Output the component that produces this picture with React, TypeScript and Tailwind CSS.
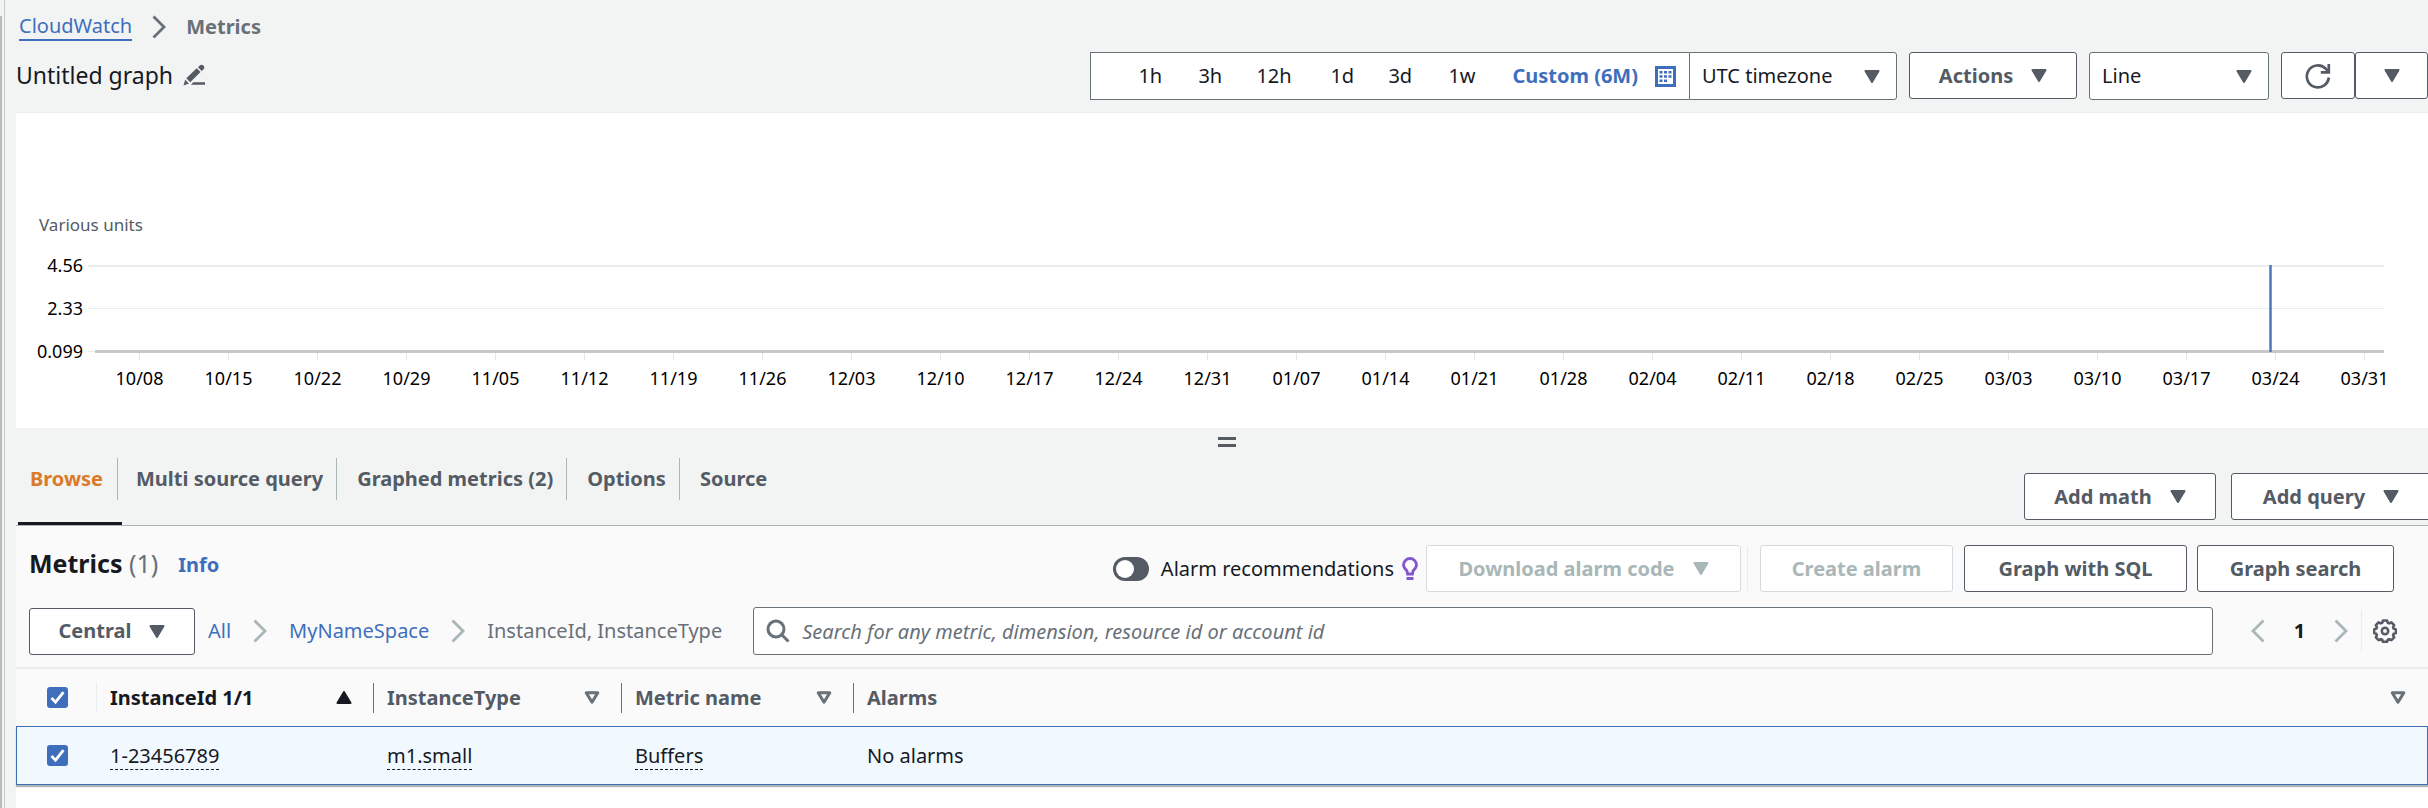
import type { ReactNode } from "react";

const TICKS = [
  "10/08", "10/15", "10/22", "10/29", "11/05", "11/12", "11/19", "11/26", "12/03",
  "12/10", "12/17", "12/24", "12/31", "01/07", "01/14", "01/21", "01/28", "02/04",
  "02/11", "02/18", "02/25", "03/03", "03/10", "03/17", "03/24", "03/31",
];

const RANGES = [
  { label: "1h", width: "w-[60px]" },
  { label: "3h", width: "w-[58px]" },
  { label: "12h", width: "w-[74px]" },
  { label: "1d", width: "w-[58px]" },
  { label: "3d", width: "w-[60px]" },
  { label: "1w", width: "w-[64px]" },
];

function Caret({ className = "" }: { className?: string }) {
  return (
    <svg viewBox="0 0 16 13" className={`h-[13px] w-4 shrink-0 fill-current ${className}`} aria-hidden="true">
      <path d="M1.5 0h13a1 1 0 0 1 .9 1.5L9 12.3a1.2 1.2 0 0 1-2 0L.6 1.5A1 1 0 0 1 1.5 0z" />
    </svg>
  );
}

function SortIcon() {
  return (
    <svg viewBox="0 0 16 14" className="h-[14px] w-4 shrink-0 text-[#687078]" aria-hidden="true">
      <path d="M2.2 1.7h11.6L8 11.2z" fill="none" stroke="currentColor" strokeWidth="3" strokeLinejoin="round" />
    </svg>
  );
}

function Chevron({ className = "", left = false }: { className?: string; left?: boolean }) {
  return (
    <svg viewBox="0 0 14 24" className={`h-6 w-[14px] shrink-0 ${className}`} aria-hidden="true">
      <path d={left ? "M12.5 1.5L2 12l10.5 10.5" : "M1.5 1.5L12 12 1.5 22.5"} fill="none" stroke="currentColor" strokeWidth="2.8" />
    </svg>
  );
}

function Button({ children, disabled, className = "" }: { children: ReactNode; disabled?: boolean; className?: string }) {
  return (
    <button
      type="button"
      disabled={disabled}
      className={`flex h-[47px] shrink-0 items-center justify-center gap-[18px] whitespace-nowrap rounded-[3px] border bg-white text-xl font-bold ${
        disabled ? "border-[#d5dbdb] text-[#aab7b8]" : "border-[#545b64] text-[#545b64]"
      } ${className}`}
    >
      {children}
    </button>
  );
}

function Check({ label }: { label: string }) {
  return (
    <span className="relative flex size-[21px]">
      <input type="checkbox" defaultChecked aria-label={label} className="size-[21px] appearance-none rounded-[3px] bg-[#3f6fbc]" />
      <svg viewBox="0 0 21 21" className="pointer-events-none absolute inset-0 size-[21px]" aria-hidden="true">
        <path d="M4.500 11l4 4.200 8-10" fill="none" stroke="white" strokeWidth="2.800" />
      </svg>
    </span>
  );
}

function Picker({ label, value, className }: { label: string; value: string; className: string }) {
  return (
    <div className={`relative h-12 border border-[#687078] bg-white ${className}`}>
      <select aria-label={label} className="h-full w-full appearance-none bg-transparent pl-3 pr-10 text-xl text-[#16191f]">
        <option>{value}</option>
      </select>
      <Caret className="pointer-events-none absolute right-4 top-[17px] text-[#545b64]" />
    </div>
  );
}

function Header() {
  return (
    <header className="pb-3">
      <nav aria-label="Breadcrumb" className="flex h-[52px] items-center gap-5 pl-[3px] pt-[2px] text-xl">
        <a href="#cloudwatch" className="border-b-2 border-[#3f6fbc] leading-[26px] text-[#3f6fbc]">CloudWatch</a>
        <Chevron className="text-[#687078]" />
        <span className="font-bold text-[#687078]">Metrics</span>
      </nav>
      <div className="flex items-start">
        <div className="flex h-[46px] items-center gap-[10px]">
          <h1 className="text-[23px] text-[#16191f]">Untitled graph</h1>
          <button type="button" aria-label="Edit graph name" className="text-[#545b64]">
            <svg viewBox="0 0 22 22" className="size-[22px]" aria-hidden="true">
              <path d="M.5 21.500l1.600-5.800 3.900 3.900zM3.300 14.200L13.700 4.200l3.800 3.800L7.200 18.200zM15 3.200l1.800-1.800a2.700 2.700 0 0 1 3.800 3.800L18.700 7zM8 20.800l2.300-2.600H22v2.600z" fill="currentColor" />
            </svg>
          </button>
        </div>
        <div className="ml-auto flex items-start gap-3">
          <div className="flex">
            <div className="flex h-12 items-center border border-r-0 border-[#687078] bg-white pl-[47px] pr-[13px] text-xl text-[#16191f]">
              {RANGES.map((r) => (
                <button key={r.label} type="button" className={`text-left ${r.width}`}>{r.label}</button>
              ))}
              <button type="button" className="flex items-center gap-[17px] whitespace-nowrap font-bold text-[#3f6fbc]">
                Custom (6M)
                <svg viewBox="0 0 21 21" className="size-[21px]" aria-hidden="true">
                  <path d="M0 0h21v21H0z" fill="currentColor" />
                  <path d="M3 3h15v15H3z" fill="white" />
                  <path d="M4.500 5h3v2.500h-3zM9 5h3v2.500H9zM13.500 5h3v2.500h-3zM4.500 9.200h3v2.500h-3zM9 9.200h3v2.500H9zM13.500 9.200h3v2.500h-3zM4.500 13.500h3V16h-3zM9 13.500h3V16H9z" fill="currentColor" />
                </svg>
              </button>
            </div>
            <Picker label="Time zone" value="UTC timezone" className="w-52 rounded-r-[3px]" />
          </div>
          <Button className="w-[168px]">Actions <Caret /></Button>
          <Picker label="Graph type" value="Line" className="w-[180px] rounded-[3px]" />
          <div className="flex">
            <Button className="w-[74px]">
              <svg viewBox="0 0 26 26" className="size-[26px]" aria-label="Refresh">
                <path d="M23.800 14.500A11 11 0 1 1 20.500 5.500L23 8.500" fill="none" stroke="currentColor" strokeWidth="2.700" />
                <path d="M23.800 1v8.300h-8" fill="none" stroke="currentColor" strokeWidth="2.700" />
              </svg>
            </Button>
            <Button className="w-[73px]"><Caret /></Button>
          </div>
        </div>
      </div>
    </header>
  );
}

function Chart() {
  const at = (i: number) => `${((i + 0.5) / TICKS.length) * 100}%`;
  return (
    <section aria-label="Graph" className="border-t border-[#eaeded] bg-white pb-9 pt-[98px]">
      <p className="pl-[23px] text-[17px] leading-7 text-[#545b64]">Various units</p>
      <div className="mt-3 flex">
        <div className="flex h-[114px] w-[67px] shrink-0 flex-col text-right text-lg leading-7 text-black">
          <span className="h-[43px]">4.56</span>
          <span className="h-[43px]">2.33</span>
          <span>0.099</span>
        </div>
        <div className="ml-3 mr-[19px] flex-1 pt-[14px]">
          <svg className="block h-24 w-full overflow-visible" aria-hidden="true">
            <rect x="-7" y="0" width="99.22%" height="2" fill="#eaeded" />
            <rect x="-7" y="43" width="99.22%" height="1" fill="#eaeded" />
            <rect x="-7" y="86" width="8" height="1" fill="#eaeded" />
            {TICKS.map((t, i) => (
              <line key={t} x1={at(i)} x2={at(i)} y1="88" y2="95" stroke="#e3e6e6" strokeWidth="1" />
            ))}
            <rect x="0" y="85" width="98.92%" height="3" fill="#c8c8c8" />
            <line x1="94.015%" x2="94.015%" y1="0" y2="87" stroke="#4a78bd" strokeWidth="2.500" />
          </svg>
          <div className="flex pt-[3px] text-lg leading-7 text-black">
            {TICKS.map((t) => (
              <span key={t} className="flex-1 basis-0 text-center">{t}</span>
            ))}
          </div>
        </div>
      </div>
    </section>
  );
}

function Tabs() {
  const rest = ["Multi source query", "Graphed metrics (2)", "Options", "Source"];
  return (
    <div className="flex items-start border-b border-[#aab7b8]">
      <div role="tablist" className="flex text-xl font-bold">
        <button role="tab" aria-selected="true" type="button" className="ml-[2px] h-[69px] w-[104px] border-b-3 border-[#16191f] pb-5 text-left text-[#d97b29]">
          <span className="flex h-[42px] w-[100px] items-center border-r border-[#aab7b8] pl-3">Browse</span>
        </button>
        {rest.map((t, i) => (
          <button key={t} role="tab" aria-selected="false" type="button" className={`mt-[2px] flex h-[42px] items-center whitespace-nowrap border-[#aab7b8] pr-[13px] text-[#545b64] ${i === 0 ? "pl-[14px]" : "pl-5"} ${i < 3 ? "border-r" : ""}`}>
            {t}
          </button>
        ))}
      </div>
      <div className="-mr-[3px] ml-auto flex gap-[15px] pt-[17px]">
        <Button className="w-48">Add math <Caret /></Button>
        <Button className="w-[200px]">Add query <Caret /></Button>
      </div>
    </div>
  );
}

function Toolbar() {
  return (
    <div className="border-b-2 border-[#eaeded] pb-3 pl-[13px] pt-[19px]">
      <div className="flex items-center pr-[34px]">
        <h2 className="mb-3 text-[25px] leading-8 font-bold text-[#16191f]">
          Metrics <span className="font-normal text-[#687078]">(1)</span>
        </h2>
        <a href="#info" className="mb-2 ml-5 text-xl font-bold text-[#3f6fbc]">Info</a>
        <div className="ml-auto flex items-center">
          <label className="flex items-center gap-3 whitespace-nowrap text-xl text-[#16191f]">
            <input
              type="checkbox"
              role="switch"
              className="flex h-6 w-9 appearance-none items-center rounded-full bg-[#545b64] pl-[3px] before:size-[18px] before:rounded-full before:bg-white"
            />
            Alarm recommendations
          </label>
          <svg viewBox="0 0 16 24" className="ml-2 h-6 w-4 text-[#8456ce]" aria-hidden="true">
            <path d="M5.500 17l-.5-3C3 12 1.500 10.500 1.500 8a6.500 6.500 0 0 1 13 0c0 2.500-1.500 4-3.500 6l-.5 3z" fill="none" stroke="currentColor" strokeWidth="2.800" />
            <path d="M4.500 20h7v3h-7z" fill="currentColor" />
          </svg>
          <Button disabled className="ml-2 w-[315px]">Download alarm code <Caret /></Button>
          <span className="ml-[6px] mr-3 h-[45px] border-l border-[#eaeded]" />
          <Button disabled className="w-[193px]">Create alarm</Button>
          <Button className="ml-[11px] w-[223px]">Graph with SQL</Button>
          <Button className="ml-[10px] w-[197px]">Graph search</Button>
        </div>
      </div>
      <div className="mt-[15px] flex items-center text-xl">
        <Button className="w-[166px]">Central <Caret /></Button>
        <nav aria-label="Metric path" className="ml-[13px] flex items-center gap-[22px] whitespace-nowrap">
          <a href="#all" className="text-[#3f6fbc]">All</a>
          <Chevron className="text-[#aab7b8]" />
          <a href="#namespace" className="text-[#3f6fbc]">MyNameSpace</a>
          <Chevron className="text-[#aab7b8]" />
          <span className="w-[234px] text-[#687078]">InstanceId, InstanceType</span>
        </nav>
        <label className="ml-8 flex h-12 flex-1 items-center gap-3 rounded-[3px] border border-[#687078] bg-white px-3">
          <svg viewBox="0 0 24 24" className="size-6 shrink-0 text-[#687078]" aria-hidden="true">
            <circle cx="10" cy="10" r="8" fill="none" stroke="currentColor" strokeWidth="3" />
            <path d="M15.500 15.500l7 7" stroke="currentColor" strokeWidth="3" />
          </svg>
          <input
            type="search"
            aria-label="Search metrics"
            placeholder="Search for any metric, dimension, resource id or account id"
            className="h-full min-w-0 flex-1 bg-transparent outline-none placeholder:italic placeholder:text-[#687078]"
          />
        </label>
        <div className="ml-[38px] flex items-center pr-[31px]">
          <button type="button" aria-label="Previous page" className="text-[#aab7b8]"><Chevron left /></button>
          <button type="button" className="w-[69px] text-center font-bold text-[#16191f]">1</button>
          <button type="button" aria-label="Next page" className="text-[#aab7b8]"><Chevron /></button>
          <span className="ml-[13px] h-[42px] border-l border-[#eaeded]" />
          <button type="button" aria-label="Preferences" className="ml-[11px] text-[#545b64]">
            <svg viewBox="0 0 24 24" className="size-6" aria-hidden="true">
              <path
                d="M10 1.500h4l.8 2.300 1.400.6 2.200-1.100 2.700 2.800-1 2.200.6 1.300 2.200.8v3.600l-2.200.8-.6 1.400 1 2.200-2.700 2.700-2.200-1-1.400.6-.8 2.200h-4l-.8-2.200-1.400-.6-2.200 1-2.700-2.700 1-2.200-.6-1.400-2.200-.8v-3.600l2.200-.8.6-1.300-1-2.200 2.700-2.800 2.200 1.100 1.400-.6z"
                fill="none" stroke="currentColor" strokeWidth="2.600" strokeLinejoin="round"
              />
              <circle cx="12" cy="12" r="3.200" fill="none" stroke="currentColor" strokeWidth="2.500" />
            </svg>
          </button>
        </div>
      </div>
    </div>
  );
}

function MetricsTable() {
  const dashed = "border-b border-dashed border-[#16191f] leading-6";
  return (
    <table className="w-full table-fixed border-separate border-spacing-0 text-left text-xl">
      <colgroup>
        <col className="w-[81px]" />
        <col className="w-[277px]" />
        <col className="w-[248px]" />
        <col className="w-[232px]" />
        <col />
      </colgroup>
      <thead className="text-[#545b64]">
        <tr className="h-[57px]">
          <th className="p-0">
            <div className="flex h-[30px] items-center border-r border-[#eaeded] pl-[31px]"><Check label="Select all metrics" /></div>
          </th>
          <th className="p-0">
            <div className="flex h-[30px] items-center justify-between border-r border-[#687078] pl-[13px] pr-[21px] text-[#16191f]">
              InstanceId 1/1 <Caret className="rotate-180" />
            </div>
          </th>
          <th className="p-0">
            <div className="flex h-[30px] items-center justify-between border-r border-[#687078] pl-[13px] pr-[21px]">InstanceType <SortIcon /></div>
          </th>
          <th className="p-0">
            <div className="flex h-[30px] items-center justify-between border-r border-[#687078] pl-[13px] pr-[21px]">Metric name <SortIcon /></div>
          </th>
          <th className="p-0">
            <div className="flex h-[30px] items-center justify-between pl-[13px] pr-[22px]">Alarms <SortIcon /></div>
          </th>
        </tr>
      </thead>
      <tbody className="bg-white text-[#16191f]">
        <tr className="h-[59px] bg-[#f1f9ff] shadow-[0_2px_1px_#b0b4b8] *:border-y *:border-[#3f6fb5] *:p-0">
          <td className="border-l"><div className="pl-[30px]"><Check label="Select 1-23456789" /></div></td>
          <td><div className="pl-[13px]"><span className={dashed}>1-23456789</span></div></td>
          <td><div className="pl-[13px]"><span className={dashed}>m1.small</span></div></td>
          <td><div className="pl-[13px]"><span className={dashed}>Buffers</span></div></td>
          <td className="border-r"><div className="pl-[13px]">No alarms</div></td>
        </tr>
      </tbody>
    </table>
  );
}

export default function App() {
  return (
    <div className="flex min-h-screen overflow-hidden bg-[#f2f4f4] font-['Noto_Sans',sans-serif]">
      <div className="flex w-4 shrink-0">
        <div className="mt-4 w-[2px] bg-[#bbbbbb]" />
        <div className="ml-[2px] w-px bg-[#c5cacd]" />
      </div>
      <main className="flex min-w-0 flex-1 flex-col">
        <Header />
        <Chart />
        <div className="flex h-7 items-center justify-center pl-[10px]">
          <button type="button" aria-label="Resize panels" className="flex h-[10px] w-[18px] flex-col justify-between">
            <span className="h-[3px] w-full bg-[#545b64]" />
            <span className="h-[3px] w-full bg-[#545b64]" />
          </button>
        </div>
        <Tabs />
        <section className="flex flex-1 flex-col bg-white">
          <div className="bg-[#fafafa]">
            <Toolbar />
            <MetricsTable />
          </div>
        </section>
      </main>
    </div>
  );
}
